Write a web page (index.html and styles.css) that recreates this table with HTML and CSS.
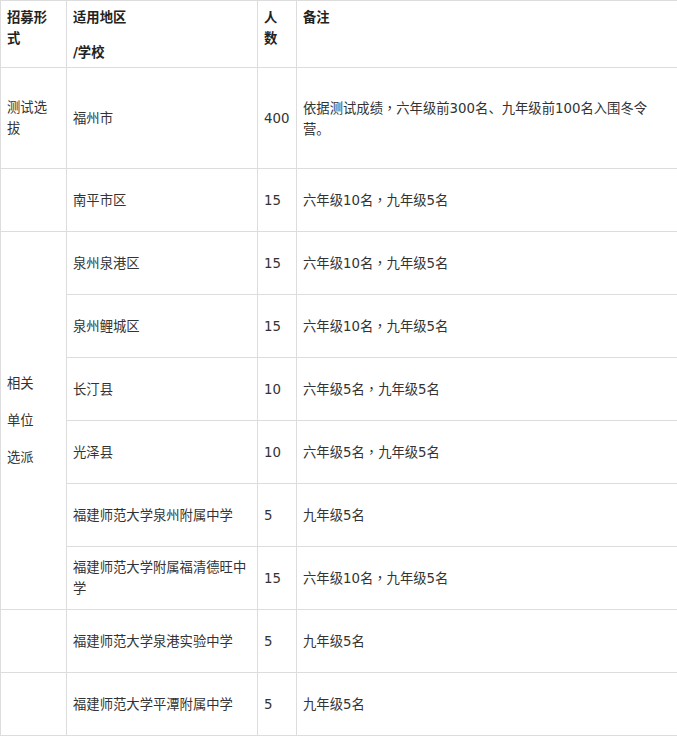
FILE: index.html
```html
<!DOCTYPE html>
<html lang="zh-CN">
<head>
<meta charset="utf-8">
<title>招募表</title>
<link rel="stylesheet" href="styles.css">
</head>
<body>
<table class="plan">
  <colgroup>
    <col class="c-form">
    <col class="c-area">
    <col class="c-num">
    <col class="c-note">
  </colgroup>
  <thead>
    <tr class="row-head">
      <th>招募形式</th>
      <th><div class="para">适用地区</div><div class="para para-gap">/学校</div></th>
      <th>人数</th>
      <th>备注</th>
    </tr>
  </thead>
  <tbody>
    <tr class="row-tall">
      <td>测试选拔</td>
      <td>福州市</td>
      <td class="num">400</td>
      <td>依据测试成绩<span class="cm" lang="zh-TW">，</span>六年级前300名、九年级前100名入围冬令营。</td>
    </tr>
    <tr>
      <td></td>
      <td>南平市区</td>
      <td class="num">15</td>
      <td>六年级10名<span class="cm" lang="zh-TW">，</span>九年级5名</td>
    </tr>
    <tr>
      <td rowspan="6"><div class="para">相关</div><div class="para para-gap2">单位</div><div class="para para-gap2">选派</div></td>
      <td>泉州泉港区</td>
      <td class="num">15</td>
      <td>六年级10名<span class="cm" lang="zh-TW">，</span>九年级5名</td>
    </tr>
    <tr>
      <td>泉州鲤城区</td>
      <td class="num">15</td>
      <td>六年级10名<span class="cm" lang="zh-TW">，</span>九年级5名</td>
    </tr>
    <tr>
      <td>长汀县</td>
      <td class="num">10</td>
      <td>六年级5名<span class="cm" lang="zh-TW">，</span>九年级5名</td>
    </tr>
    <tr>
      <td>光泽县</td>
      <td class="num">10</td>
      <td>六年级5名<span class="cm" lang="zh-TW">，</span>九年级5名</td>
    </tr>
    <tr>
      <td>福建师范大学泉州附属中学</td>
      <td class="num">5</td>
      <td>九年级5名</td>
    </tr>
    <tr>
      <td>福建师范大学附属福清德旺中学</td>
      <td class="num">15</td>
      <td>六年级10名<span class="cm" lang="zh-TW">，</span>九年级5名</td>
    </tr>
    <tr>
      <td></td>
      <td>福建师范大学泉港实验中学</td>
      <td class="num">5</td>
      <td>九年级5名</td>
    </tr>
    <tr>
      <td></td>
      <td>福建师范大学平潭附属中学</td>
      <td class="num">5</td>
      <td>九年级5名</td>
    </tr>
  </tbody>
</table>
</body>
</html>
```

FILE: styles.css
```css
html, body {
  margin: 0;
  padding: 0;
  background: #ffffff;
}

body {
  font-family: "DejaVu Sans", "Noto Sans CJK SC", sans-serif;
  font-size: 13.33px;
  line-height: 21px;
  color: #333333;
}

.plan {
  border-collapse: collapse;
  table-layout: fixed;
  width: 677px;
}

.c-form { width: 66px; }
.c-area { width: 191px; }
.c-num  { width: 39px; }
.c-note { width: 381px; }

.plan th,
.plan td {
  border: 1px solid #dddddd;
  padding: 0 6px;
  text-align: left;
  word-break: break-all;
}

.plan th {
  font-weight: bold;
  vertical-align: top;
  padding-top: 6px;
  color: #222222;
}

.plan td {
  vertical-align: middle;
}

.plan td.num {
  white-space: nowrap;
  word-break: normal;
}

.cm {
  font-family: "Noto Sans CJK TC", sans-serif;
}

.row-head { height: 67px; }
.plan tbody tr { height: 63px; }
.plan tbody tr.row-tall { height: 101px; }

.para-gap { margin-top: 14px; }
.para-gap2 { margin-top: 16px; }
```
